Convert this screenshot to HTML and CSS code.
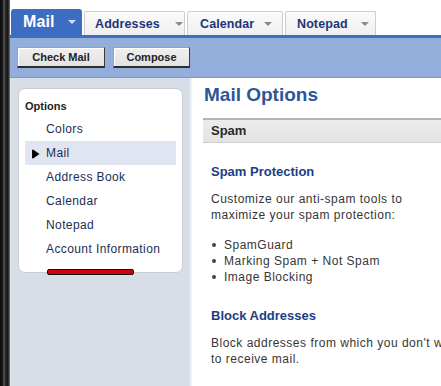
FILE: index.html
```html
<!DOCTYPE html>
<html>
<head>
<meta charset="utf-8">
<link rel="stylesheet" href="styles.css">
</head>
<body>
<div class="edge"></div>
<div class="app">
  <div class="tabs">
    <div class="tab tab-active"><span class="tab-label">Mail</span><span class="caret"></span></div>
    <div class="tab"><span class="tab-label">Addresses</span><span class="caret"></span></div>
    <div class="tab"><span class="tab-label">Calendar</span><span class="caret"></span></div>
    <div class="tab"><span class="tab-label">Notepad</span><span class="caret"></span></div>
  </div>
  <div class="toolbar">
    <button class="btn btn-check">Check Mail</button>
    <button class="btn btn-compose">Compose</button>
  </div>
  <div class="content">
    <div class="sidebar">
      <div class="panel">
        <div class="panel-title">Options</div>
        <ul class="menu">
          <li class="menu-item">Colors</li>
          <li class="menu-item selected"><svg class="arrow" width="8" height="10" viewBox="0 0 8 10"><path d="M1 0.5 L7.5 5 L1 9.5 Q0 9.5 0 8.5 L0 1.5 Q0 0.5 1 0.5 Z" fill="#000"/></svg>Mail</li>
          <li class="menu-item">Address Book</li>
          <li class="menu-item">Calendar</li>
          <li class="menu-item">Notepad</li>
          <li class="menu-item">Account Information</li>
        </ul>
        <div class="mark"></div>
      </div>
    </div>
    <div class="main">
      <h1 class="page-title">Mail Options</h1>
      <div class="section-bar">Spam</div>
      <div class="section">
        <h2 class="section-title">Spam Protection</h2>
        <p class="text">Customize our anti-spam tools to<br>maximize your spam protection:</p>
        <ul class="bullets">
          <li>SpamGuard</li>
          <li>Marking Spam + Not Spam</li>
          <li>Image Blocking</li>
        </ul>
        <h2 class="section-title block-title">Block Addresses</h2>
        <p class="text wide">Block addresses from which you don't want to receive mail.</p>
      </div>
    </div>
  </div>
</div>
</body>
</html>
```
FILE: styles.css
```css
html, body {
  margin: 0;
  padding: 0;
}
body {
  width: 441px;
  height: 386px;
  overflow: hidden;
  display: flex;
  font-family: "Liberation Sans", Arial, sans-serif;
  background: #fff;
}
.edge {
  width: 10px;
  flex: none;
  background: linear-gradient(to right, #0a0a0a 0, #1c1c1c 3px, #6a6a6a 4px, #2a2a2a 5px, #151515 8px, #7a7a7a 10px);
}
.app {
  flex: 1;
  display: flex;
  flex-direction: column;
  min-width: 0;
}
.tabs {
  height: 35px;
  box-sizing: border-box;
  padding-left: 1px;
  display: flex;
  align-items: flex-end;
  gap: 2px;
  background: #fff;
}
.tab {
  height: 24px;
  box-sizing: border-box;
  display: flex;
  align-items: center;
  padding: 0 4px 0 10px;
  border: 1px solid #cfcfcf;
  border-bottom: none;
  background: linear-gradient(#fbfbfb, #efefef);
  border-radius: 2px 2px 0 0;
}
.tab-label {
  font-weight: bold;
  font-size: 12.5px;
  color: #1d3579;
  letter-spacing: 0.1px;
}
.caret {
  width: 0;
  height: 0;
  margin-left: 14px;
  border-left: 4px solid transparent;
  border-right: 4px solid transparent;
  border-top: 4px solid #8a8a8a;
}
.tab-active {
  height: 26px;
  width: 71px;
  padding-left: 12px;
  border: none;
  background: #3d6dc2;
  border-radius: 3px 3px 0 0;
}
.tab-active .tab-label {
  color: #fff;
  font-size: 16px;
}
.tab-active .caret {
  border-top-color: #d3def2;
  margin-left: 13px;
}
.tabs .tab:nth-child(2) { width: 101px; }
.tabs .tab:nth-child(2) .caret { margin-left: 15px; }
.tabs .tab:nth-child(3) { width: 96px; padding-left: 12px; }
.tabs .tab:nth-child(3) .caret { margin-left: 10px; }
.tabs .tab:nth-child(4) { width: 91px; padding-left: 11px; }
.tabs .tab:nth-child(4) .caret { margin-left: 13px; }
.toolbar {
  height: 43px;
  box-sizing: border-box;
  border-top: 3px solid #3f6dbf;
  border-bottom: 1px solid #8996ad;
  background: #93aedb;
  display: flex;
  align-items: flex-start;
  padding: 9px 0 0 7px;
  gap: 8px;
}
.btn {
  height: 21px;
  box-sizing: border-box;
  margin: 0;
  padding: 0;
  font-family: "Liberation Sans", Arial, sans-serif;
  font-weight: bold;
  font-size: 11px;
  color: #222;
  background: linear-gradient(#f0f0f0, #e2e2e2);
  border: 1px solid #a0a0a0;
  border-right-color: #3a3a3a;
  border-bottom: 2px solid #2e2e2e;
  border-radius: 0;
  box-shadow: inset 1px 1px 0 #fff;
}
.btn-check { width: 88px; }
.btn-compose { width: 77px; }
.content {
  flex: 1;
  display: flex;
  min-height: 0;
}
.sidebar {
  width: 180px;
  flex: none;
  background: #d7dee8;
  border-left: 1px solid #e3e7ee;
  box-sizing: border-box;
  padding: 10px 7px 0 7px;
}
.panel {
  position: relative;
  background: #fff;
  border: 1px solid #c9ccd2;
  border-radius: 7px;
  width: 165px;
  box-sizing: border-box;
  padding: 9px 6px 11px 6px;
}
.panel-title {
  font-weight: bold;
  font-size: 11px;
  line-height: 16px;
  color: #222;
}
.menu {
  list-style: none;
  margin: 3px 0 0 0;
  padding: 0;
}
.menu-item {
  height: 24px;
  line-height: 24px;
  font-size: 12px;
  letter-spacing: 0.4px;
  color: #1e2d52;
  padding-left: 21px;
  position: relative;
}
.menu-item.selected {
  background: #dfe6f2;
}
.arrow {
  position: absolute;
  left: 7px;
  top: 8px;
}
.mark {
  position: absolute;
  left: 28px;
  bottom: -3px;
  width: 87px;
  height: 6px;
  box-sizing: border-box;
  background: #d4000c;
  border: 1px solid #111;
  border-radius: 2px;
}
.main {
  flex: 1;
  min-width: 0;
  border-left: 2px solid #eef1f6;
  background: #fff;
  padding-left: 12px;
  overflow: hidden;
}
.page-title {
  margin: 6px 0 0 0;
  font-size: 19px;
  line-height: 22px;
  font-weight: bold;
  color: #2d5598;
}
.section-bar {
  margin-top: 12px;
  margin-left: -1px;
  width: 300px;
  height: 25px;
  box-sizing: border-box;
  border-top: 2px solid #b4b4b4;
  border-bottom: 1px solid #cdcdcd;
  background: linear-gradient(#ececec, #e3e3e3);
  padding-left: 8px;
  font-weight: bold;
  font-size: 13px;
  line-height: 22px;
  color: #2a2a2a;
}
.section {
  padding-left: 7px;
  width: 280px;
}
.section-title {
  margin: 21px 0 0 0;
  font-size: 13px;
  line-height: 16px;
  font-weight: bold;
  color: #1d3d83;
}
.block-title {
  margin-top: 23px;
}
.text {
  margin: 11px 0 0 0;
  font-size: 12px;
  line-height: 16px;
  letter-spacing: 0.5px;
  color: #363636;
}
.wide {
  width: 256px;
}
.bullets {
  list-style: none;
  margin: 14px 0 0 0;
  padding: 0;
}
.bullets li {
  position: relative;
  padding-left: 13px;
  font-size: 12px;
  line-height: 16px;
  letter-spacing: 0.5px;
  color: #363636;
}
.bullets li::before {
  content: "";
  position: absolute;
  left: 1px;
  top: 6px;
  width: 4px;
  height: 4px;
  border-radius: 50%;
  background: #444;
}
```
